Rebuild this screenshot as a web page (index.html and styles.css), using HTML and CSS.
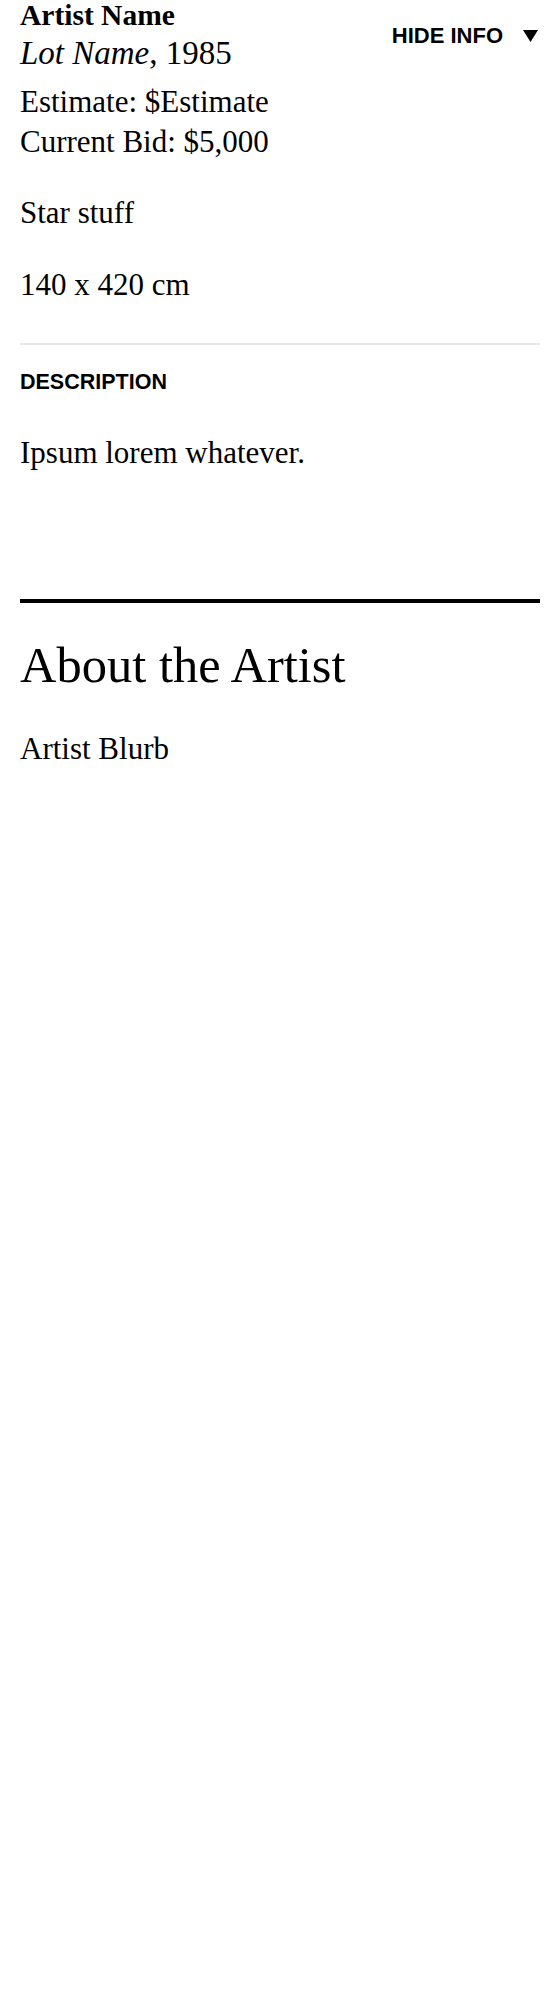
FILE: index.html
```html
<!DOCTYPE html>
<html lang="en">
<head>
<meta charset="utf-8">
<title>Lot Details</title>
<link rel="stylesheet" href="styles.css">
</head>
<body>
<main class="page">
  <section class="lot">
    <header class="lot-header">
      <div class="lot-id">
        <div class="artist-name">Artist Name</div>
        <div class="lot-title"><em>Lot Name</em>, 1985</div>
        <div class="lot-prices">
          <div>Estimate: $Estimate</div>
          <div>Current Bid: $5,000</div>
        </div>
      </div>
      <button class="toggle" type="button">
        <span>HIDE INFO</span>
        <svg class="toggle-icon" width="15" height="12" viewBox="0 0 15 12" aria-hidden="true"><path d="M0 0H15L7.5 12Z" fill="#000"/></svg>
      </button>
    </header>
    <p class="lot-medium">Star stuff</p>
    <p class="lot-size">140 x 420 cm</p>
  </section>
  <section class="description">
    <h3 class="label">DESCRIPTION</h3>
    <p class="body-text">Ipsum lorem whatever.</p>
  </section>
  <section class="about">
    <h2 class="about-title">About the Artist</h2>
    <p class="body-text">Artist Blurb</p>
  </section>
</main>
</body>
</html>
```

FILE: styles.css
```css
html, body {
  margin: 0;
  padding: 0;
  background: #fff;
}

body {
  font-family: "Liberation Serif", "Times New Roman", serif;
  color: #000;
  font-size: 31px;
  line-height: 40px;
}

.page {
  padding: 0 20px;
}

.lot {
  padding-bottom: 38px;
  border-bottom: 2px solid #e5e5e5;
}

.lot-header {
  display: flex;
  justify-content: space-between;
  align-items: flex-start;
}

.artist-name {
  font-weight: bold;
  font-size: 29.5px;
  line-height: 30px;
}

.lot-title {
  font-size: 33px;
  line-height: 46px;
}

.lot-title em {
  font-style: italic;
}

.lot-prices {
  margin-top: 6px;
}

.toggle {
  display: flex;
  align-items: center;
  gap: 20px;
  margin-top: 23px;
  padding: 0;
  border: 0;
  background: none;
  font-family: "Liberation Sans", Arial, sans-serif;
  font-weight: bold;
  font-size: 22px;
  line-height: 26px;
  color: #000;
  cursor: pointer;
}

.toggle-icon {
  display: block;
  margin-right: 2px;
}

.lot-medium {
  margin: 31px 0 0;
}

.lot-size {
  margin: 32px 0 0;
}

.description {
  padding: 24px 0 126px;
  border-bottom: 4px solid #000;
}

.label {
  margin: 0;
  font-family: "Liberation Sans", Arial, sans-serif;
  font-weight: bold;
  font-size: 21.5px;
  line-height: 26px;
}

.body-text {
  margin: 38px 0 0;
}

.about {
  padding-top: 33px;
}

.about-title {
  margin: 0;
  font-weight: normal;
  font-size: 50.5px;
  line-height: 59px;
}

.about .body-text {
  margin-top: 34px;
}
```
